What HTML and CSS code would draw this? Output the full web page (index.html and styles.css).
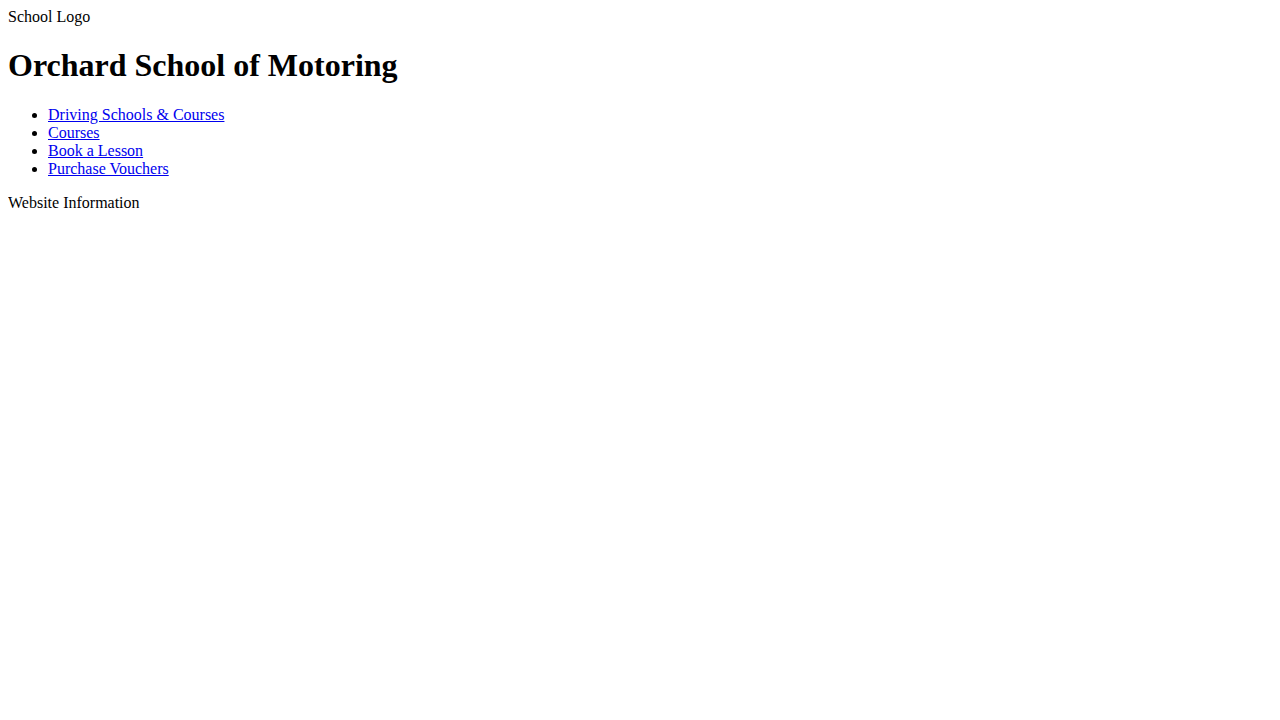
FILE: index.html
```html
<!DOCTYPE html>
<html lang="en">
<head>
<meta charset="utf-8">
<title>Orchard School of Motoring</title>
<link rel="stylesheet" href="styles.css">
</head>
<body class="page">
<header class="site-header">
<div class="logo">School Logo</div>
<h1 class="title">Orchard School of Motoring</h1>
<nav class="nav">
<ul class="nav-list">
<li><a href="#">Driving Schools &amp; Courses</a></li>
<li><a href="#">Courses</a></li>
<li><a href="#">Book a Lesson</a></li>
<li><a href="#">Purchase Vouchers</a></li>
</ul>
</nav>
</header>
<footer class="site-footer">
<p class="info">Website Information</p>
</footer>
</body>
</html>
```
FILE: styles.css
```css
.page {
  margin: 8px;
  font-family: "Liberation Serif", "Times New Roman", serif;
  font-size: 16px;
  color: #000;
  background: #fff;
}
.title {
  font-size: 2em;
  margin: 0.67em 0;
}
.nav-list {
  margin: 1em 0;
  padding-left: 40px;
}
.info {
  margin: 1em 0;
}
```
